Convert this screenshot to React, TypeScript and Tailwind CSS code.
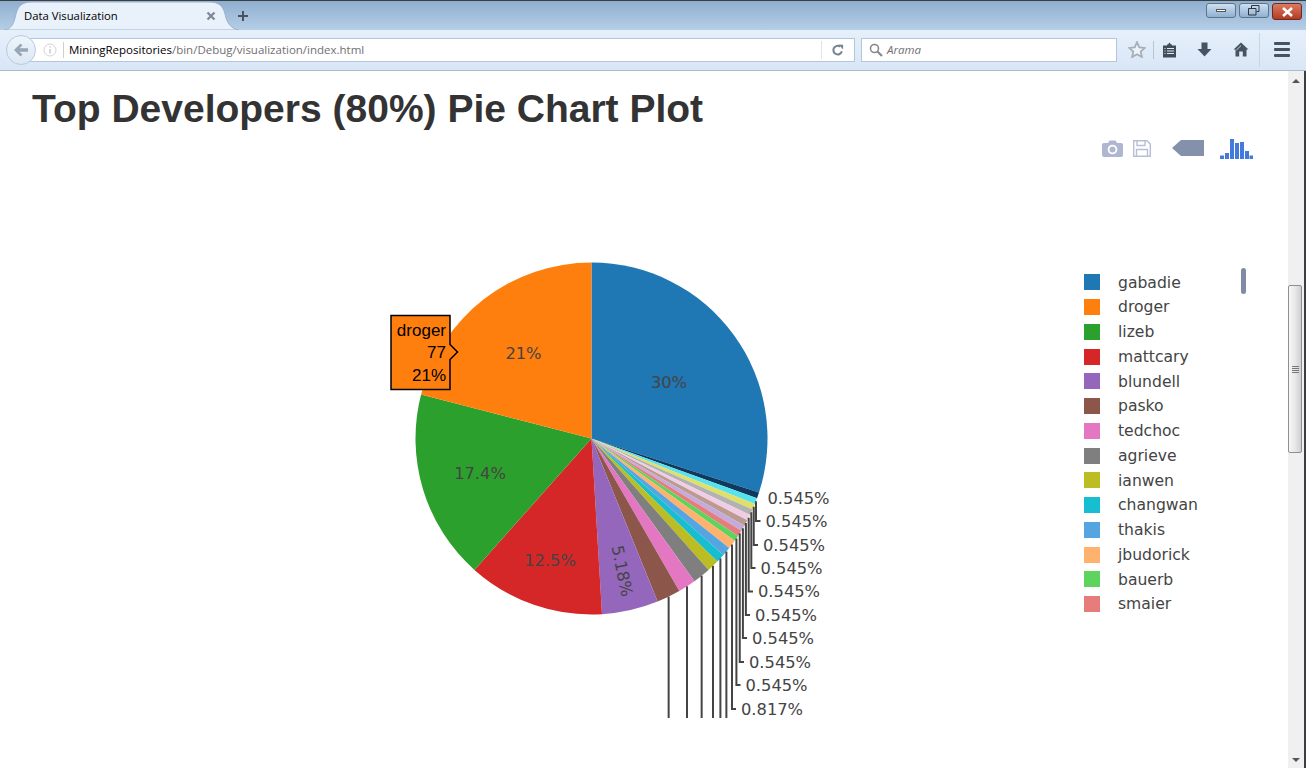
const CX = 591.5;
const CY = 438.5;
const R = 176;
const TOTAL = 367;

const slices: [number, string][] = [
  [110, "#1f77b4"],
  [2, "#0f3a5f"],
  [2, "#58e1ee"],
  [2, "#e0e068"],
  [2, "#b2b2b2"],
  [2, "#f0cde4"],
  [2, "#bb9a90"],
  [2, "#c3abdb"],
  [2, "#e77c7c"],
  [2, "#5ed35e"],
  [3, "#ffb26e"],
  [3, "#55a6e0"],
  [3, "#17becf"],
  [4, "#bcbd22"],
  [6, "#7f7f7f"],
  [6, "#e377c2"],
  [8, "#8c564b"],
  [19, "#9467bd"],
  [46, "#d62728"],
  [64, "#2ca02c"],
  [77, "#ff7f0e"],
];

const pt = (deg: number, r = R): [number, number] => {
  const a = (deg * Math.PI) / 180;
  return [CX + r * Math.sin(a), CY - r * Math.cos(a)];
};

let acc = 0;
const arcs = slices.map(([v, color]) => {
  const start = (acc / TOTAL) * 360;
  acc += v;
  const end = (acc / TOTAL) * 360;
  return { start, end, mid: (start + end) / 2, color };
});

const sector = (s: number, e: number) => {
  const [x1, y1] = pt(s);
  const [x2, y2] = pt(e);
  return `M${CX},${CY}L${x1},${y1}A${R},${R} 0 ${e - s > 180 ? 1 : 0} 1 ${x2},${y2}Z`;
};

const outLabels: [string, number, number, number][] = [
  ["0.545%", 1, 767.5, 498],
  ["0.545%", 2, 765.5, 521],
  ["0.545%", 3, 763, 545],
  ["0.545%", 4, 760.5, 568],
  ["0.545%", 5, 758, 591.5],
  ["0.545%", 6, 755, 615],
  ["0.545%", 7, 752, 638],
  ["0.545%", 8, 749, 662],
  ["0.545%", 9, 745.5, 685],
  ["0.817%", 10, 741, 709],
];

const legend: [string, string][] = [
  ["gabadie", "#1f77b4"],
  ["droger", "#ff7f0e"],
  ["lizeb", "#2ca02c"],
  ["mattcary", "#d62728"],
  ["blundell", "#9467bd"],
  ["pasko", "#8c564b"],
  ["tedchoc", "#e377c2"],
  ["agrieve", "#7f7f7f"],
  ["ianwen", "#bcbd22"],
  ["changwan", "#17becf"],
  ["thakis", "#55a6e0"],
  ["jbudorick", "#ffb26e"],
  ["bauerb", "#5ed35e"],
  ["smaier", "#e77c7c"],
];

function TabStrip() {
  return (
    <div className="relative flex h-[30px] items-start bg-gradient-to-b from-[#8fafcf] to-[#b6cee7] border-t border-[#3b3f44]">
      <div className="relative ml-[4px] flex h-[29px] w-[236px] items-center pl-[20px] pr-[24px]">
        <svg className="absolute left-0 top-0" width="236" height="29" viewBox="0 0 236 29">
          <path
            d="M0,29 C8,28 10,22 12,13 C14,5 18,1 28,1 H205 C215,1 219,5 221,13 C223,22 226,27 235,29 Z"
            fill="#e9f1fb"
            stroke="#9fb3c8"
            strokeWidth="1"
          />
        </svg>
        <span className="relative flex-1 pt-[1px] font-['Open_Sans'] text-[11.3px] text-black">Data Visualization</span>
        <svg className="relative" width="10" height="10" viewBox="0 0 10 10">
          <path d="M1.5,1.5 L8.5,8.5 M8.5,1.5 L1.5,8.5" stroke="#7d8893" strokeWidth="2.2" />
        </svg>
      </div>
      <svg className="relative ml-[-3px] mt-[9px]" width="12" height="12" viewBox="0 0 12 12">
        <path d="M6,1 V11 M1,6 H11" stroke="#47525e" strokeWidth="2" />
      </svg>
      <div className="ml-auto mr-[4px] mt-[2px] flex items-start gap-[3px]">
        <div className="flex h-[15px] w-[30px] items-center justify-center rounded-[3px] border border-[#5f7488] bg-gradient-to-b from-[#cfe0f0] to-[#8fb0d0]">
          <div className="h-[3px] w-[10px] border border-[#555] bg-white" />
        </div>
        <div className="flex h-[15px] w-[30px] items-center justify-center rounded-[3px] border border-[#5f7488] bg-gradient-to-b from-[#cfe0f0] to-[#8fb0d0]">
          <svg width="12" height="11" viewBox="0 0 12 11">
            <path d="M3.5,3 V0.5 H11 V6.5 H8.5 M0.5,3.5 H8 V10 H0.5 Z" fill="none" stroke="#2c3640" strokeWidth="1" />
          </svg>
        </div>
        <div className="flex h-[17px] w-[30px] items-center justify-center rounded-[3px] border border-[#6a2a2a] bg-gradient-to-b from-[#dd7a62] to-[#b23a22]">
          <svg width="13" height="10" viewBox="0 0 13 10">
            <path d="M2,1 L11,9 M11,1 L2,9" stroke="#fff" strokeWidth="2.6" />
          </svg>
        </div>
      </div>
    </div>
  );
}

function Toolbar() {
  return (
    <div className="flex h-[41px] items-center border-b border-[#a9bdd1] bg-gradient-to-b from-[#e6f0fb] to-[#d9e6f6] pl-[6px] pb-[1px]">
      <div className="relative z-10 mr-[-15px] flex h-[30px] w-[30px] items-center justify-center rounded-full border border-[#b9cbdd] bg-gradient-to-b from-[#eef5fc] to-[#dce8f5]">
        <svg width="16" height="14" viewBox="0 0 16 14">
          <path d="M7.5,0.5 L1,7 L7.5,13.5 L9.5,11.5 L6.5,8.8 H15 V5.2 H6.5 L9.5,2.5 Z" fill="#98a7b5" />
        </svg>
      </div>
      <div className="flex h-[24px] w-[834px] items-center border border-[#b3c7dc] bg-white pl-[21px]">
        <svg width="14" height="14" viewBox="0 0 14 14">
          <circle cx="7" cy="7" r="6" fill="none" stroke="#d4d4d4" strokeWidth="1" />
          <path d="M7,3.2 V4.6 M7,6 V10.6" stroke="#c6c6c6" strokeWidth="1.4" />
        </svg>
        <div className="ml-[6px] h-[16px] w-px bg-[#cfcfcf]" />
        <span className="ml-[5px] flex-1 font-['Open_Sans'] text-[11.5px] leading-none text-[#6f6f6f]">
          <span className="text-black">MiningRepositories</span>/bin/Debug/visualization/index.html
        </span>
        <div className="h-[18px] w-px bg-[#e3e3e3]" />
        <div className="flex w-[32px] items-center justify-center">
          <svg width="12" height="12" viewBox="0 0 14 14">
            <path d="M11.5,8.5 A5,5 0 1 1 9.5,3" fill="none" stroke="#78858f" strokeWidth="2.4" />
            <path d="M7.5,0.5 L13,1 V6.5 Z" fill="#78858f" />
          </svg>
        </div>
      </div>
      <div className="ml-[6px] flex h-[24px] w-[256px] items-center border border-[#b3c7dc] bg-white pl-[7px]">
        <svg width="14" height="14" viewBox="0 0 14 14">
          <circle cx="5.5" cy="5.5" r="4" fill="none" stroke="#8a8a8a" strokeWidth="1.6" />
          <path d="M8.5,8.5 L13,13" stroke="#8a8a8a" strokeWidth="2.2" />
        </svg>
        <span className="ml-[4px] font-['Open_Sans'] text-[11.5px] italic text-[#6f6f6f]">Arama</span>
      </div>
      <div className="ml-[4px] flex w-[32px] items-center justify-center">
        <svg width="18" height="17" viewBox="0 0 18 17">
          <path
            d="M9,1.2 L11.3,6.3 L16.8,6.9 L12.7,10.6 L13.9,16 L9,13.2 L4.1,16 L5.3,10.6 L1.2,6.9 L6.7,6.3 Z"
            fill="#eef3f9"
            stroke="#a4afba"
            strokeWidth="1.8"
          />
        </svg>
      </div>
      <div className="h-[18px] w-px bg-[#b7c4d1]" />
      <div className="flex w-[31px] items-center justify-center">
        <svg width="15" height="16" viewBox="0 0 15 16">
          <path d="M5,2.5 H6 L7.5,0.5 L9,2.5 H10 V3.5 H14 V15.5 H1 V3.5 H5 Z" fill="#3f4c59" />
          <path d="M5,6.5 H12 M5,9 H12 M5,11.5 H12 M2.5,6.5 H3.5 M2.5,9 H3.5 M2.5,11.5 H3.5" stroke="#dfe9f4" strokeWidth="1" />
        </svg>
      </div>
      <div className="ml-[1px] flex w-[36px] items-center justify-center">
        <svg width="15" height="15" viewBox="0 0 15 15">
          <path d="M4.5,0.5 H10.5 V7 H14.5 L7.5,14.5 L0.5,7 H4.5 Z" fill="#465361" />
        </svg>
      </div>
      <div className="ml-[1px] flex w-[36px] items-center justify-center">
        <svg width="16" height="15" viewBox="0 0 16 15">
          <path d="M8,0.5 L15.5,7.5 H13.5 V14.5 H9.8 V9.5 H6.2 V14.5 H2.5 V7.5 H0.5 Z" fill="#465361" />
          <path d="M8,3.6 L3.4,8" stroke="#e4edf7" strokeWidth="0.8" />
        </svg>
      </div>
      <div className="h-[34px] w-px bg-[#c8d5e3]" />
      <div className="flex w-[44px] items-center justify-center">
        <div className="flex w-[16px] flex-col gap-[3px]">
          <div className="h-[3px] rounded-[1px] bg-[#465361]" />
          <div className="h-[3px] rounded-[1px] bg-[#465361]" />
          <div className="h-[3px] rounded-[1px] bg-[#465361]" />
        </div>
      </div>
    </div>
  );
}

function ModeBar() {
  return (
    <div className="mr-[35px] mt-[10px] flex h-[20px] items-start justify-end">
      <svg className="mt-[1px]" width="21" height="17" viewBox="0 0 21 17">
        <path
          d="M2,3 H6 L7.5,0.5 H13.5 L15,3 H19 Q21,3 21,5 V15 Q21,17 19,17 H2 Q0,17 0,15 V5 Q0,3 2,3 Z"
          fill="#aeb7cf"
        />
        <circle cx="10.5" cy="9.5" r="4.8" fill="#fff" />
        <circle cx="10.5" cy="9.5" r="3" fill="#aeb7cf" />
      </svg>
      <svg className="ml-[10px] mt-[1px]" width="18" height="17" viewBox="0 0 18 17">
        <path
          d="M0.7,0.7 H14 L17.3,4 V16.3 H0.7 Z M4,0.7 V5.5 H12 V0.7 M3.5,16.3 V9.5 H14.5 V16.3"
          fill="none"
          stroke="#b6bfd5"
          strokeWidth="1.4"
        />
      </svg>
      <svg className="ml-[21px] mt-[1px]" width="32" height="16" viewBox="0 0 32 16">
        <path d="M0,8 L9,0 H32 V16 H9 Z" fill="#8491ab" />
      </svg>
      <svg className="ml-[16px]" width="33" height="20" viewBox="0 0 33 20">
        <path
          d="M0,16.5 H4 V20 H0 Z M5,14 H9 V20 H5 Z M10,0 H14 V20 H10 Z M15,4 H19 V20 H15 Z M20,3 H24 V20 H20 Z M25,12 H29 V20 H25 Z M29.5,16.5 H33 V20 H29.5 Z"
          fill="#447adb"
        />
      </svg>
    </div>
  );
}

function Pie() {
  return (
    <svg className="shrink-0 font-['DejaVu_Sans']" width="1000" height="518" viewBox="0 200 1000 518">
      {arcs.map((a, i) => (
        <path key={i} d={sector(a.start, a.end)} fill={a.color} />
      ))}
      {arcs.slice(2, 11).map((a, i) => {
        const [x, y] = pt(a.mid);
        const [, , lx, ly] = outLabels[i + 1];
        return (
          <path
            key={i}
            d={`M${x},${y} V${ly} H${lx - 5}`}
            fill="none"
            stroke="#444"
            strokeWidth="2"
          />
        );
      })}
      {arcs.slice(11, 17).map((a, i) => {
        const [x, y] = pt(a.mid);
        return <path key={i} d={`M${x},${y} V718`} fill="none" stroke="#444" strokeWidth="2" />;
      })}
      <g fontSize="16.3" fill="#444">
        <text x="669" y="388" textAnchor="middle">30%</text>
        <text x="523.5" y="358.5" textAnchor="middle">21%</text>
        <text x="480" y="478.5" textAnchor="middle">17.4%</text>
        <text x="550" y="566" textAnchor="middle">12.5%</text>
        <text transform="translate(622,571) rotate(78.5)" y="5.5" textAnchor="middle">5.18%</text>
        {outLabels.map(([t, , x, y], i) => (
          <text key={i} x={x} y={y + 5.5}>{t}</text>
        ))}
      </g>
      <path
        d="M391,315.5 H450 V344.5 L457.5,352 L450,359.5 V389.5 H391 Z"
        fill="#ff7f0e"
        stroke="#000"
        strokeWidth="1.5"
      />
      <g className="font-['Liberation_Sans']" fontSize="17" fill="#000" textAnchor="end">
        <text x="446" y="336">droger</text>
        <text x="446" y="358">77</text>
        <text x="446" y="381">21%</text>
      </g>
    </svg>
  );
}

function Legend() {
  return (
    <div className="relative ml-[84px] mt-[70px] w-[162px] self-start font-['DejaVu_Sans'] text-[15.6px] text-[#444]">
      {legend.map(([name, color]) => (
        <div key={name} className="flex h-[24.75px] items-center">
          <div className="h-[16px] w-[16px]" style={{ backgroundColor: color }} />
          <span className="ml-[18px] pt-[2px] leading-none">{name}</span>
        </div>
      ))}
      <div className="absolute left-[157px] top-[-2px] h-[26px] w-[5px] rounded-[3px] bg-[#808ba6]" />
    </div>
  );
}

function Scrollbar() {
  return (
    <div className="flex w-[16px] flex-col items-stretch bg-[#f0f0f0]">
      <div className="flex h-[17px] items-center justify-center pt-[2px]">
        <div className="h-0 w-0 border-x-[4px] border-b-[4px] border-x-transparent border-b-[#555]" />
      </div>
      <div className="mt-[197px] flex h-[168px] w-[14px] items-center justify-center rounded-[2px] border border-[#8f8f8f] bg-gradient-to-r from-[#f6f6f6] via-[#e8e8e8] to-[#cfcfcf]">
        <div className="flex w-[7px] flex-col gap-[1px]">
          <div className="h-px bg-[#777]" />
          <div className="h-px bg-[#777]" />
          <div className="h-px bg-[#777]" />
          <div className="h-px bg-[#777]" />
        </div>
      </div>
      <div className="mt-auto flex h-[17px] items-center justify-center">
        <div className="h-0 w-0 border-x-[4px] border-t-[4px] border-x-transparent border-t-[#555]" />
      </div>
    </div>
  );
}

export default function App() {
  return (
    <div className="flex h-[768px] w-[1306px] flex-col overflow-hidden bg-white">
      <TabStrip />
      <Toolbar />
      <div className="flex h-[697px]">
        <main className="w-[1288px] overflow-hidden">
          <h1 className="pl-[32px] pt-[18px] font-['Liberation_Sans'] text-[39px] font-bold leading-[40px] text-[#333]">
            Top Developers (80%) Pie Chart Plot
          </h1>
          <ModeBar />
          <div className="mt-[41px] flex">
            <Pie />
            <Legend />
          </div>
        </main>
        <Scrollbar />
        <div className="w-[2px] bg-[#3b3f44]" />
      </div>
    </div>
  );
}
